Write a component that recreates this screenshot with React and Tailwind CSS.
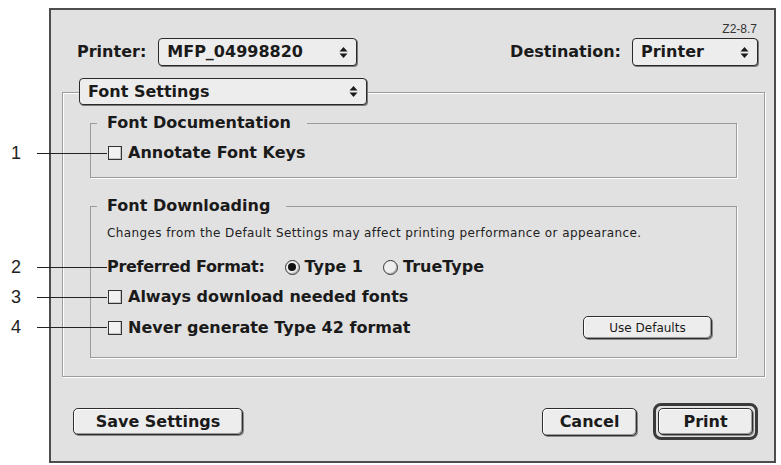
import React from 'react'

// Mac OS 9 style "Font Settings" print dialog

function Arrows() {
  return (
    <svg width="9" height="13" viewBox="0 0 9 13">
      <path d="M0.5 5.5 L4.5 1 L8.5 5.5 Z" fill="#1a1a1a" />
      <path d="M0.5 7.5 L4.5 12 L8.5 7.5 Z" fill="#1a1a1a" />
    </svg>
  )
}

function Popup({ label, className }) {
  return (
    <div className={`flex rounded-[4px] border border-[#2a2a2a] bg-[#ededed] shadow-[1px_1px_0_#7a7a7a] ${className}`}>
      <span className="flex flex-1 items-center pl-[8px] text-[16px] font-bold">{label}</span>
      <span className="flex w-[26px] items-center justify-center">
        <Arrows />
      </span>
    </div>
  )
}

function Checkbox() {
  return <span className="inline-block h-[14px] w-[14px] shrink-0 border border-[#333] bg-[#f2f2f2] shadow-[inset_-1px_-1px_0_#c4c4c4]" />
}

function Radio({ on }) {
  return (
    <span className="flex h-[15px] w-[15px] shrink-0 items-center justify-center rounded-full border border-[#333] bg-[#eeeeee] shadow-[inset_-1px_-1px_0_#b5b5b5]">
      {on && <span className="h-[8px] w-[8px] rounded-full bg-[#111]" />}
    </span>
  )
}

function Button({ children, className }) {
  return (
    <div className={`flex items-center justify-center rounded-[5px] border border-[#2e2e2e] bg-[#ededed] text-[16px] font-bold shadow-[inset_-1px_-1px_0_#9a9a9a,inset_1px_1px_0_#ffffff,1px_1px_0_#8a8a8a] ${className}`}>
      {children}
    </div>
  )
}

function Callout({ n, top }) {
  return (
    <div className="absolute left-0 flex w-[107px] items-center" style={{ top }}>
      <span className="w-[37px] pl-[11px] text-[18px] leading-[20px] font-['Liberation_Sans',sans-serif] text-[#222]">{n}</span>
      <span className="h-px flex-1 bg-[#222]" />
    </div>
  )
}

export default function App() {
  return (
    <div className="relative h-[465px] w-[781px] overflow-hidden bg-white pt-[8px] pl-[49px] font-['DejaVu_Sans',sans-serif] text-[#1a1a1a]">
      <div className="flex h-[455px] w-[727px] flex-col border-2 border-[#4d4d4d] bg-[#e1e1e1]">
        <div className="pt-[11px] pr-[17px] text-right text-[12px] leading-[16px] font-['Liberation_Sans',sans-serif] text-[#333]">Z2-8.7</div>

        <div className="mt-[1px] flex items-center justify-between pr-[16px] pl-[26px]">
          <div className="flex items-center gap-[12px]">
            <span className="text-[16px] font-bold">Printer:</span>
            <Popup label="MFP_04998820" className="h-[28px] w-[199px]" />
          </div>
          <div className="flex items-center gap-[11px]">
            <span className="text-[16px] font-bold">Destination:</span>
            <Popup label="Printer" className="h-[28px] w-[126px]" />
          </div>
        </div>

        <Popup label="Font Settings" className="relative z-10 mt-[12px] ml-[28px] h-[27px] w-[288px]" />

        <div className="mt-[-13px] ml-[11px] h-[285px] w-[703px] border border-[#9c9c9c] px-[27px] pt-[21px] shadow-[inset_1px_1px_0_#ffffff,1px_1px_0_#ffffff]">
          <fieldset className="border border-[#9c9c9c] pl-[6px] pb-[15px] shadow-[1px_1px_0_#ffffff]">
            <legend className="bg-[#e1e1e1] pr-[16px] pl-[10px] text-[16px] leading-[18px] font-bold">Font Documentation</legend>
            <div className="mt-[12px] flex h-[18px] items-center gap-[6px] pl-[11px]">
              <Checkbox />
              <span className="text-[16px] font-bold">Annotate Font Keys</span>
            </div>
          </fieldset>

          <fieldset className="mt-[19px] border border-[#9c9c9c] pr-[24px] pl-[6px] pb-[18px] shadow-[1px_1px_0_#ffffff]">
            <legend className="bg-[#e1e1e1] pr-[16px] pl-[10px] text-[16px] leading-[18px] font-bold">Font Downloading</legend>
            <div className="mt-[11px] pl-[10px] text-[12px] leading-[14px] tracking-[0.4px] text-[#222]">
              Changes from the Default Settings may affect printing performance or appearance.
            </div>
            <div className="mt-[17px] flex h-[20px] items-center pl-[10px] text-[16px] font-bold">
              <span className="tracking-[-0.3px]">Preferred Format:</span>
              <span className="ml-[20px] flex items-center gap-[5px]">
                <Radio on />
                Type 1
              </span>
              <span className="ml-[20px] flex items-center gap-[5px]">
                <Radio />
                TrueType
              </span>
            </div>
            <div className="mt-[10px] flex h-[20px] items-center gap-[6px] pl-[11px]">
              <Checkbox />
              <span className="text-[16px] font-bold">Always download needed fonts</span>
            </div>
            <div className="mt-[9px] flex h-[23px] items-center pl-[11px]">
              <Checkbox />
              <span className="ml-[6px] flex-1 text-[16px] font-bold">Never generate Type 42 format</span>
              <Button className="h-[23px] w-[129px] !text-[12px] !font-normal">Use Defaults</Button>
            </div>
          </fieldset>
        </div>

        <div className="mt-[26px] flex items-center pr-[16px] pl-[22px]">
          <Button className="h-[27px] w-[170px]">Save Settings</Button>
          <div className="flex-1" />
          <Button className="h-[28px] w-[95px]">Cancel</Button>
          <div className="ml-[16px] flex h-[37px] w-[105px] rounded-[8px] border-[3px] border-[#3a3a3a] p-[2px]">
            <Button className="flex-1">Print</Button>
          </div>
        </div>
      </div>

      <Callout n="1" top={143} />
      <Callout n="2" top={257} />
      <Callout n="3" top={287} />
      <Callout n="4" top={317} />
    </div>
  )
}
